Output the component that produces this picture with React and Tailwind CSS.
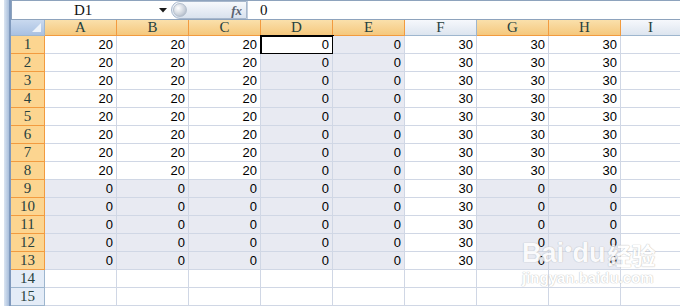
import React from 'react';

const cols = ['A', 'B', 'C', 'D', 'E', 'F', 'G', 'H'];
const selectedCols = ['A', 'B', 'C', 'D', 'E', 'G', 'H'];
const rows = Array.from({ length: 15 }, (_, i) => i + 1);

const headFont = "font-['Liberation_Serif',serif] text-[15px] leading-none text-[#27413e]";

// value shown in a cell, '' for empty rows
function cellValue(r, c) {
  if (r > 13) return '';
  if (c === 'F') return '30';
  if (r <= 8) {
    if (['A', 'B', 'C'].includes(c)) return '20';
    if (['D', 'E'].includes(c)) return '0';
    return '30';
  }
  return '0';
}

function isShaded(r, c) {
  if (r > 13 || c === 'F') return false;
  if (r === 1 && c === 'D') return false;
  if (['D', 'E'].includes(c)) return true;
  return r >= 9;
}

function FormulaBar() {
  return (
    <div className="flex h-[20px] border-t border-b border-[#8ea3bd] bg-white">
      <div className="relative w-[160px] flex items-center border-l border-[#8ea3bd]">
        <span className="ml-[62px] font-['Liberation_Serif',serif] text-[15px] leading-none text-[#111]">D1</span>
        <svg className="absolute left-[147px] top-[7px]" width="8" height="5" viewBox="0 0 8 5">
          <path d="M0 0 H8 L4 4.5 Z" fill="#1a1a1a" />
        </svg>
      </div>
      <div className="relative w-[76px] h-[18px] rounded-l-full border border-[#a7b7cc] bg-gradient-to-b from-[#f7f9fc] to-[#d9e2ee] flex items-center">
        <div className="ml-[1px] w-[14px] h-[14px] rounded-full bg-[radial-gradient(circle_at_35%_35%,#ffffff,#c9d0da_60%,#9aa6b6)] border border-[#b4bfcd]" />
        <span className="ml-auto mr-[4px] font-['Liberation_Serif',serif] italic font-bold text-[13px] leading-none text-[#5a6270]">fx</span>
      </div>
      <div className="flex items-center border-l border-[#c2cedd]">
        <span className="ml-[12px] font-['Liberation_Serif',serif] text-[15px] leading-none text-[#111]">0</span>
      </div>
    </div>
  );
}

function HeaderRow() {
  return (
    <div className="flex h-[18px]">
      <div className="relative w-[34px] border-r border-b border-[#9eb6ce] bg-gradient-to-b from-[#c9d9ef] to-[#a9c1e2]">
        <svg className="absolute right-[3px] bottom-[3px]" width="9" height="9" viewBox="0 0 9 9">
          <path d="M9 0 V9 H0 Z" fill="#eef3fa" />
        </svg>
      </div>
      {cols.map((c) => {
        const sel = selectedCols.includes(c);
        return (
          <div
            key={c}
            className={`w-[72px] flex items-center justify-center border-r border-b ${headFont} ${
              sel
                ? 'border-[#f29b3f] bg-gradient-to-b from-[#fae0ab] to-[#f5c87d]'
                : 'border-[#9eb6ce] bg-gradient-to-b from-[#f6f8fc] to-[#dde5ef]'
            }`}
          >
            {c}
          </div>
        );
      })}
      <div className={`flex-1 flex items-center justify-center border-b border-[#9eb6ce] bg-gradient-to-b from-[#f6f8fc] to-[#dde5ef] ${headFont}`}>
        I
      </div>
    </div>
  );
}

function DataRow({ r }) {
  const sel = r <= 13;
  return (
    <div className="flex h-[18px] shrink-0">
      <div
        className={`w-[34px] flex items-center justify-center border-r border-b ${headFont} ${
          sel ? 'border-[#f29b3f] bg-[#fcd590]' : 'border-[#9eb6ce] bg-[#e4ecf7]'
        }`}
      >
        {r}
      </div>
      {cols.map((c) => {
        const active = r === 1 && c === 'D';
        return (
          <div
            key={c}
            className={`w-[72px] flex items-end justify-end pr-[3px] pb-[2px] border-r border-b border-[#d0d7e5] font-['Liberation_Sans',sans-serif] text-[13px] leading-none text-black ${
              isShaded(r, c) ? 'bg-[#e8eaf2]' : 'bg-white'
            } ${active ? 'outline-2 outline-black -outline-offset-1' : ''}`}
          >
            {cellValue(r, c)}
          </div>
        );
      })}
      <div className="flex-1 border-b border-[#d0d7e5] bg-white" />
    </div>
  );
}

export default function App() {
  return (
    <div className="relative w-[680px] h-[306px] overflow-hidden bg-white flex">
      {/* strip of the window behind and the sheet's left frame */}
      <div className="w-[11px] flex shrink-0">
        <div className="w-[4px] bg-white" />
        <div className="w-[5px] bg-gradient-to-r from-[#dbe5f2] to-[#a8bedb]" />
        <div className="w-[2px] bg-[#7f99bd]" />
      </div>

      <div className="flex-1 flex flex-col">
        <FormulaBar />
        <div className="h-[3px] bg-[#eef1f5]" />
        <HeaderRow />
        {rows.map((r) => (
          <DataRow key={r} r={r} />
        ))}
      </div>

      {/* baidu watermark */}
      <div className="absolute left-[522px] top-[240px] flex flex-col items-start pointer-events-none select-none opacity-80">
        <div className="flex items-end font-['Liberation_Sans',sans-serif] font-bold text-[27px] leading-none text-white [text-shadow:0_0_1px_#b5b5b5,0_0_1px_#b5b5b5]">
          <span>Bai</span>
          <span className="mb-[12px] text-[14px]">●</span>
          <span>du</span>
          <span className="ml-[2px] font-['Noto_Sans_CJK_SC',sans-serif] text-[24px]">经验</span>
        </div>
        <div className="mt-[3px] font-['Liberation_Sans',sans-serif] font-bold text-[15px] leading-none text-white [text-shadow:0_0_1px_#b5b5b5,0_0_1px_#b5b5b5]">
          jingyan.baidu.com
        </div>
      </div>
    </div>
  );
}
